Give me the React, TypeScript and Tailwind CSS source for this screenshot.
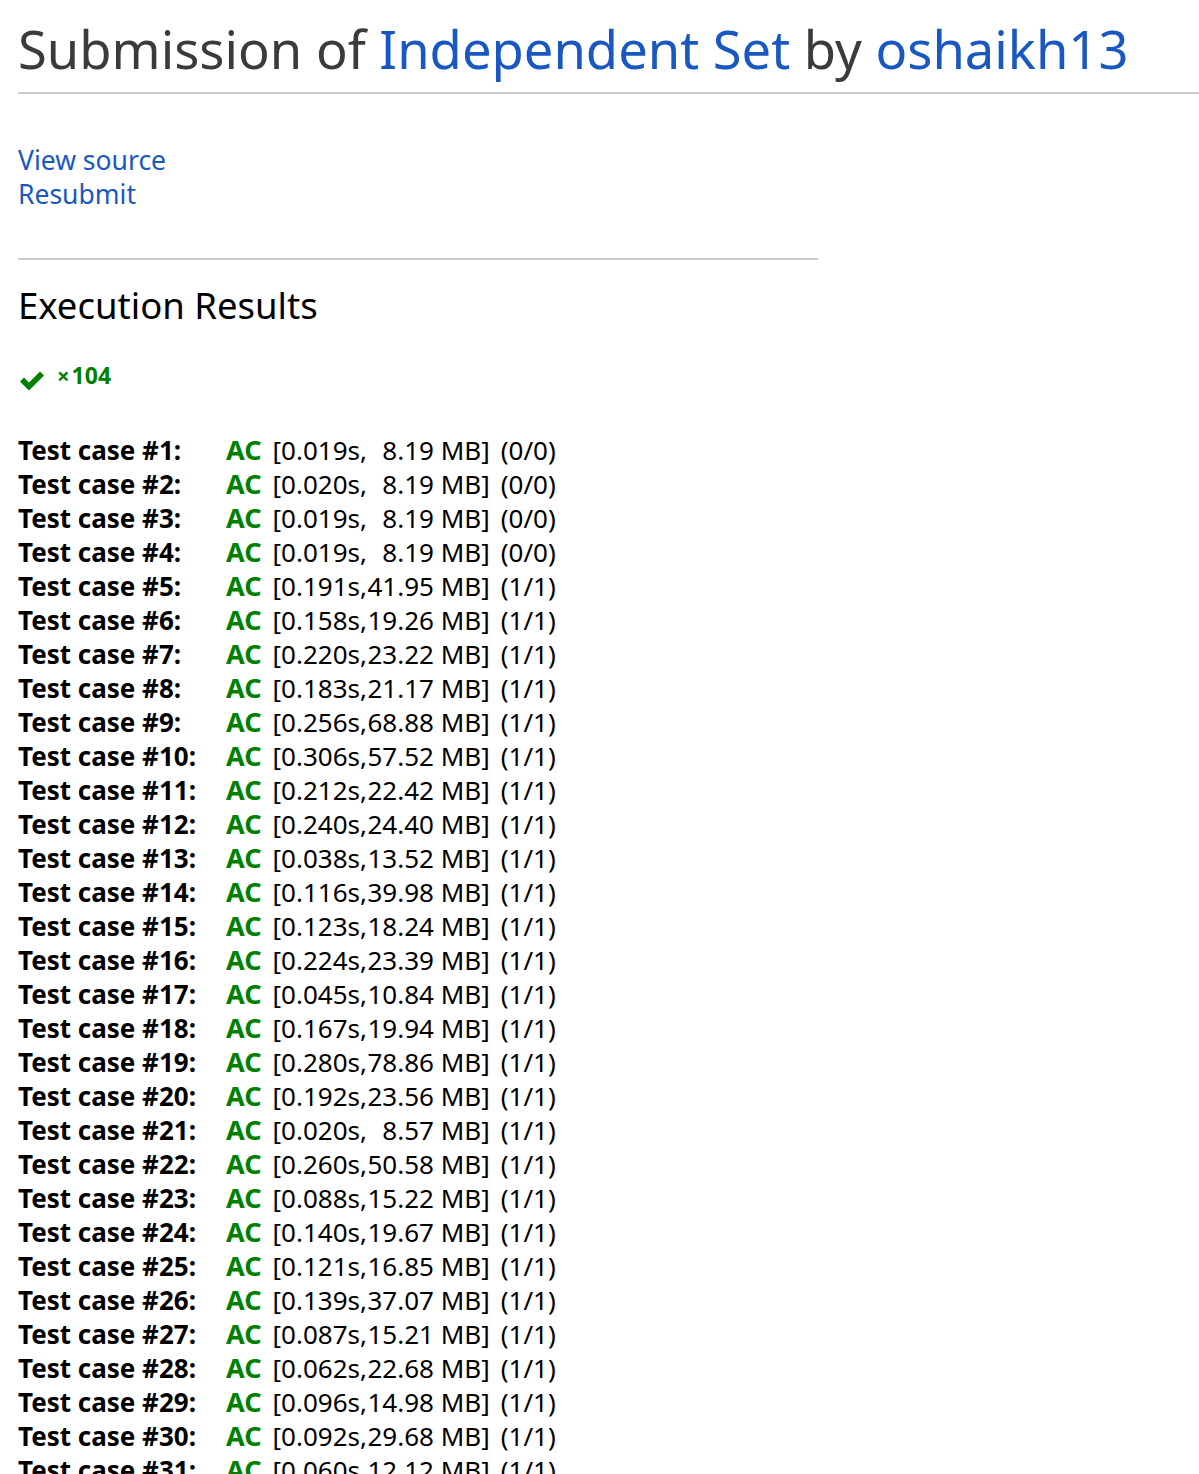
import React from "react";

const rows: [string, string, string][] = [
  ["0.019", "8.19", "0/0"],
  ["0.020", "8.19", "0/0"],
  ["0.019", "8.19", "0/0"],
  ["0.019", "8.19", "0/0"],
  ["0.191", "41.95", "1/1"],
  ["0.158", "19.26", "1/1"],
  ["0.220", "23.22", "1/1"],
  ["0.183", "21.17", "1/1"],
  ["0.256", "68.88", "1/1"],
  ["0.306", "57.52", "1/1"],
  ["0.212", "22.42", "1/1"],
  ["0.240", "24.40", "1/1"],
  ["0.038", "13.52", "1/1"],
  ["0.116", "39.98", "1/1"],
  ["0.123", "18.24", "1/1"],
  ["0.224", "23.39", "1/1"],
  ["0.045", "10.84", "1/1"],
  ["0.167", "19.94", "1/1"],
  ["0.280", "78.86", "1/1"],
  ["0.192", "23.56", "1/1"],
  ["0.020", "8.57", "1/1"],
  ["0.260", "50.58", "1/1"],
  ["0.088", "15.22", "1/1"],
  ["0.140", "19.67", "1/1"],
  ["0.121", "16.85", "1/1"],
  ["0.139", "37.07", "1/1"],
  ["0.087", "15.21", "1/1"],
  ["0.062", "22.68", "1/1"],
  ["0.096", "14.98", "1/1"],
  ["0.092", "29.68", "1/1"],
  ["0.060", "12.12", "1/1"],
];

export default function App() {
  return (
    <div
      className="h-[1474px] overflow-hidden bg-white pl-[18px]"
      style={{ fontFamily: '"Noto Sans", "Open Sans", sans-serif' }}
    >
      <h1 className="pt-[14px] pb-[8px] text-[52.5px] leading-[70px] text-[#3b3b3b] border-b-2 border-[#cccccc] whitespace-nowrap">
        Submission of <span className="text-[#1958c1]">Independent Set</span> by{" "}
        <span className="text-[#1958c1]">oshaikh13</span>
      </h1>
      <div className="w-[800px]">
        <div className="pt-[49px] pb-[47px] text-[26.5px] leading-[34px] text-[#1958c1]">
          <div>View source</div>
          <div>Resubmit</div>
        </div>
        <div className="border-t-2 border-[#cccccc]" />
        <h2 className="pt-[23px] text-[36.5px] leading-[44px] text-black">Execution Results</h2>
        <div className="mt-[36px] flex items-start gap-[12px] text-[#008000]">
          <svg width="25" height="21" viewBox="0 0 25 21" className="mt-[8px] ml-[2px]">
            <polygon points="0,10.5 4,6.5 9,11.5 20,0.5 24,4.5 9,19.5" fill="#008000" />
          </svg>
          <span className="flex items-baseline text-[23px] font-bold leading-[24px]">
            <span className="mr-[2px] text-[22px]">×</span>104
          </span>
        </div>
        <div className="mt-[41px] text-black">
          {rows.map(([t, m, p], i) => (
            <div key={i} className="flex h-[34px] items-baseline whitespace-nowrap leading-[34px]">
              <span className="w-[208px] text-[26px] font-bold">Test case #{i + 1}:</span>
              <span className="text-[27px] font-bold text-[#008000]">AC</span>
              <span className="ml-[11px] text-[26px]">[{t}s,</span>
              <span className="inline-block w-[67px] text-right text-[26px]">{m}</span>
              <span className="text-[26px]">&nbsp;MB]</span>
              <span className="ml-[11px] text-[26px]">({p})</span>
            </div>
          ))}
        </div>
      </div>
    </div>
  );
}
